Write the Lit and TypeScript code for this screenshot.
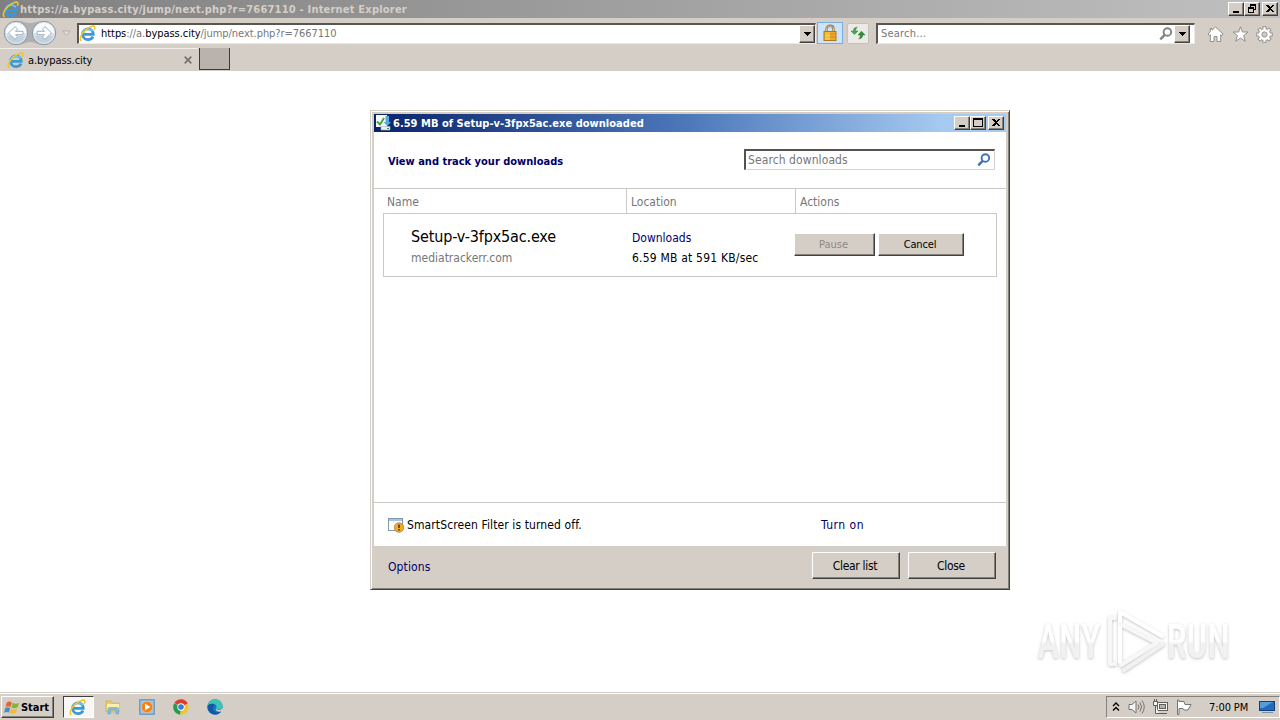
import { LitElement, html, css, svg } from 'lit'
import { customElement } from 'lit/decorators.js'

const ieLogo = (size: number) => html`
  <svg class="ie" width=${size} height=${size} viewBox="0 0 16 16">
    <path d="M13.2 10.9C12.3 12.8 10.6 13.7 8.5 13.7C5.5 13.7 3.4 11.6 3.4 8.7C3.4 5.8 5.6 3.6 8.5 3.6C11.4 3.6 13.4 5.7 13.4 8.9H4.2" fill="none" stroke="#3a9ad8" stroke-width="2.6" />
    <path d="M3.7 7.3C4.5 5 6.3 3.7 8.6 3.7C10.6 3.7 12 4.6 12.8 6" fill="none" stroke="#6cc9f2" stroke-width="1.5" />
    <path d="M2.4 14.8C-.4 13.7 2.1 8.4 6 4.9C9.9 1.4 14.3 -.2 14.9 2.1C15.1 3 14.8 3.8 14.4 4.5" fill="none" stroke="#efc52b" stroke-width="1.5" />
  </svg>
`

const lens = (color: string) => html`
  <svg class="lens" width="14" height="14" viewBox="0 0 14 14">
    <circle cx="8.4" cy="5" r="3.8" fill="#fff" stroke=${color} stroke-width="1.9" />
    <path d="M5.7 7.8L1.3 12.3" stroke=${color} stroke-width="2.4" />
  </svg>
`

const glyphs = {
  min: svg`<rect x="3" y="8" width="6" height="2" />`,
  max: svg`<path d="M1 1H11V10H1ZM2 3V9H10V3Z" fill-rule="evenodd" />`,
  restore: svg`<path d="M4 1H10V7H8V6H9V3H5V4H4ZM2 4H8V10H2ZM3 6V9H7V6Z" fill-rule="evenodd" />`,
  close: svg`<path d="M2 2H4L6 4L8 2H10L7 5.5L10 9H8L6 7L4 9H2L5 5.5Z" />`,
}

const windowButton = (name: keyof typeof glyphs) => html`
  <button class="wbtn ${name}" aria-label=${name}>
    <svg width="12" height="11" viewBox="0 0 12 11" shape-rendering="crispEdges">${glyphs[name]}</svg>
  </button>
`

const dropArrow = html`
  <svg width="8" height="4" viewBox="0 0 8 4" shape-rendering="crispEdges"><path d="M0 0H8L4 4Z" /></svg>
`

const shared = css`
  * { box-sizing: border-box; }
  svg { display: block; flex: none; }
  button {
    font: inherit;
    color: #000;
    padding: 0;
    border: 1px solid;
    border-color: #fff #404040 #404040 #fff;
    box-shadow: inset -1px -1px #858079;
    background: #d5cec7;
    display: flex;
    align-items: center;
    justify-content: center;
    flex: none;
  }
  .wbtn { width: 16px; height: 14px; }
  .wbtn svg { margin-top: -1px; }
  .wbtn.close { margin-left: 2px; }
  .grow { flex: 1; }
`

@customElement('nav-bar')
export class NavBar extends LitElement {
  static styles = [shared, css`
    :host {
      display: flex;
      height: 29px;
      align-items: center;
      padding-left: 2px;
      color: #777;
    }
    .arrows { margin-top: 2px; }
    .history { margin: 2px 6px 0 4px; }
    .field {
      display: flex;
      align-items: center;
      height: 21px;
      margin-top: 1px;
      background: #fff;
      border: solid;
      border-width: 2px 1px 1px 2px;
      border-color: #595550 #eee9e3 #eee9e3 #595550;
    }
    .address { width: 739px; }
    .url { margin: 1px 0 0 5px; letter-spacing: -0.05px; }
    .url b { font-weight: normal; color: #000; }
    .drop { width: 16px; height: 18px; }
    .lock {
      display: flex;
      width: 26px;
      height: 22px;
      margin: 1px 0 0 1px;
      align-items: center;
      justify-content: center;
      background: #cfe2fb;
      border: 1px solid #7cade0;
    }
    .refresh {
      width: 22px;
      height: 21px;
      margin: 1px 7px 0 4px;
      border: 1px solid #c5c1bc;
      border-radius: 2px;
      background: #ece9e6;
      box-shadow: none;
    }
    .search { width: 319px; padding-left: 3px; }
    .search span { margin-top: 1px; letter-spacing: 0.2px; }
    .search .drop { margin: 0 4px 0 1px; }
    .tools { display: flex; gap: 8px; margin: 4px 0 0 12px; }
    .tools svg + svg { margin-left: -0.5px; }
  `]

  render() {
    return html`
      <svg class="arrows" width="56" height="27" viewBox="0 0 56 27">
        <path d="M14 1C22 1 23 3 28 3S35 1 43 1A13 13 0 0 1 43 25C35 25 34 22 28 22S22 25 14 25A12 12 0 0 1 14 1Z" fill="#aeb0b2" />
        ${[14, 42].map(x => svg`
          <circle cx=${x} cy="13" r="11.7" fill="#dae2e9" stroke="#8999a6" />
          <path d="M${x - 10.3} 13A10.3 10.3 0 0 1 ${x + 10.3} 13Z" fill="#f8fafc" />
          <path d="M${x - 9} 16A9.4 9.4 0 0 0 ${x + 9} 16Z" fill="#c3d1df" />
        `)}
        <path d="M6.5 13L13 6.7L15.6 9.2L13.5 11.3H21V14.7H13.5L15.6 16.8L13 19.3Z" fill="#fff" stroke="#94a8b8" stroke-width=".9" />
        <path d="M49.5 13L43 6.7L40.4 9.2L42.5 11.3H35V14.7H42.5L40.4 16.8L43 19.3Z" fill="#fff" stroke="#94a8b8" stroke-width=".9" />
      </svg>
      <svg class="history" width="9" height="7" viewBox="0 0 9 7"><path d="M.8 1H8.2L4.5 5.3Z" fill="#e5e1dd" stroke="#b4aea8" /></svg>
      <div class="field address">
        ${ieLogo(17)}
        <span class="url"><b>https</b>://a.<b>bypass.city</b>/jump/next.php?r=7667110</span>
        <span class="grow"></span>
        <button class="drop" aria-label="Show address list">${dropArrow}</button>
      </div>
      <div class="lock">
        <svg width="14" height="18" viewBox="0 0 14 18">
          <path d="M3.5 8V5C3.5 .7 10.5 .7 10.5 5V8" fill="none" stroke="#8e7b49" stroke-width="2.4" />
          <path d="M3.5 8V5C3.5 1 10.5 1 10.5 5V8" fill="none" stroke="#d6c68f" />
          <rect x="1" y="7.5" width="12" height="9" fill="#f0ad22" stroke="#aa761a" />
          <path d="M2 10H12M2 13H12" stroke="#c7871a" />
          <path d="M2 8.5H7V16H2Z" fill="#ffe176" opacity=".5" />
        </svg>
      </div>
      <button class="refresh" aria-label="Refresh">
        <svg width="16" height="14" viewBox="0 0 16 14">
          <path d="M7.3 1.2C4.9 1.2 3.4 2.2 3.4 5H1L4.5 8.5L8 5H5.6C5.6 3 6.2 2 7.3 1.2Z" fill="#44a94e" stroke="#2c8538" stroke-width=".5" />
          <path d="M8.7 12.8C11.1 12.8 12.6 11.8 12.6 9H15L11.5 5.2L8 9H10.4C10.4 11 9.8 12 8.7 12.8Z" fill="#318d39" stroke="#23752c" stroke-width=".5" />
        </svg>
      </button>
      <div class="field search">
        <span>Search...</span>
        <div class="grow"></div>
        ${lens('#85817e')}
        <button class="drop" aria-label="Search options">${dropArrow}</button>
      </div>
      <div class="tools">
        <svg width="17" height="17" viewBox="0 0 17 17" fill="#fff" stroke="#938e89">
          <path d="M8.5 1L16 8L14.7 9.5L13.7 8.7V15.5H10V10.5H7V15.5H3.3V8.7L2.3 9.5L1 8L3.3 5.8V2.5H5V4.2Z" />
        </svg>
        <svg width="17" height="17" viewBox="0 0 17 17" fill="#fff" stroke="#938e89">
          <path d="M8.5 .8L10.4 6H16L11.6 9.6L13.2 15.3L8.5 12L3.8 15.3L5.4 9.6L1 6H6.6Z" />
        </svg>
        <svg width="17" height="17" viewBox="0 0 17 17">
          <g stroke="#938e89" stroke-width="4">
            ${[0, 45, 90, 135].map(a => svg`<path d="M8.5 .3V16.7" transform="rotate(${a} 8.5 8.5)" />`)}
          </g>
          <circle cx="8.5" cy="8.5" r="6.3" fill="#938e89" />
          <g stroke="#fff" stroke-width="2.2">
            ${[0, 45, 90, 135].map(a => svg`<path d="M8.5 1.2V15.8" transform="rotate(${a} 8.5 8.5)" />`)}
          </g>
          <circle cx="8.5" cy="8.5" r="5.5" fill="#fff" />
          <circle cx="8.5" cy="8.5" r="2.6" fill="#d5cec7" stroke="#938e89" />
        </svg>
      </div>
    `
  }
}

@customElement('download-dialog')
export class DownloadDialog extends LitElement {
  static styles = [shared, css`
    :host {
      display: flex;
      flex-direction: column;
      box-sizing: border-box;
      width: 640px;
      height: 480px;
      padding: 3px 2px 2px 3px;
      background: #d5cec7;
      border: 1px solid;
      border-color: #d5cec7 #404040 #404040 #d5cec7;
      box-shadow: inset 1px 1px #fff, inset -1px -1px #858079;
      font-size: 12px;
      color: #000;
    }
    .title {
      display: flex;
      align-items: center;
      height: 18px;
      margin-right: 1px;
      padding: 0 2px 0 1px;
      background: linear-gradient(90deg, #0a246a, #4d79bb 50%, #a6caf0 90%);
      color: #fff;
      font-size: 11px;
      font-weight: bold;
    }
    .title span { margin: 1px 0 0 2px; letter-spacing: 0.03px; }
    .pane {
      display: flex;
      flex-direction: column;
      height: 414px;
      margin-right: 1px;
      background: #fff;
    }
    .top {
      display: flex;
      align-items: center;
      justify-content: space-between;
      height: 56px;
      padding: 0 11px 0 14px;
      color: #000066;
      font-size: 11px;
      font-weight: bold;
    }
    .top > span { padding-top: 3px; }
    .search {
      display: flex;
      align-items: center;
      justify-content: space-between;
      width: 251px;
      height: 21px;
      margin-bottom: 2px;
      padding: 0 3px 0 2px;
      border: solid;
      border-width: 2px 1px 1px 2px;
      border-color: #55524e #d8d3cd #d8d3cd #55524e;
      color: #777;
      font-size: 12px;
      font-weight: normal;
      letter-spacing: 0.09px;
    }
    .search span { padding-top: 1px; }
    .cols {
      display: grid;
      grid-template-columns: 252px 169px 1fr;
      height: 25px;
      border-top: 1px solid #ccc9c5;
      color: #777;
      line-height: 26px;
    }
    .cols span { height: 24px; padding-left: 4px; border-left: 1px solid #ccc9c5; }
    .cols span:first-child { padding-left: 13px; border: none; }
    .item {
      display: grid;
      grid-template-columns: 221px 162px 1fr;
      height: 64px;
      margin: 0 9px;
      padding: 13px 0 0 27px;
      border: 1px solid #ccc9c5;
      line-height: 20px;
    }
    .file { font-size: 16px; letter-spacing: -0.15px; }
    .host { padding-top: 1px; color: #777; }
    .where { padding-top: 1px; }
    .speed { letter-spacing: 0.2px; }
    .link { color: #000066; }
    .acts { display: flex; gap: 3px; padding-top: 6px; }
    .acts button { width: 81px; height: 23px; padding: 1px 2px 0 0; font-size: 11px; }
    .acts button + button { width: 86px; letter-spacing: -0.15px; }
    .acts button:disabled { color: #8d8984; }
    .smart {
      display: flex;
      align-items: center;
      height: 44px;
      padding-left: 14px;
      border-top: 1px solid #ccc9c5;
      letter-spacing: 0.11px;
    }
    .smart svg { margin-right: 3px; }
    .smart .text { width: 414px; }
    .smart .link { letter-spacing: 0.5px; }
    .foot {
      display: flex;
      align-items: center;
      height: 40px;
      padding: 0 11px 0 14px;
      gap: 7px;
    }
    .foot .link { padding-top: 1px; letter-spacing: 0.12px; }
    .foot button { width: 88px; height: 27px; margin: 0 0 1px 1px; padding: 1px 2px 0 0; letter-spacing: -0.3px; }
  `]

  render() {
    return html`
      <div class="title">
        <svg width="16" height="16" viewBox="0 0 16 16">
          <rect x="1" y="0" width="11" height="12" fill="#f6fafc" />
          <path d="M2 6.5L5 9.5L9 3" stroke="#49a342" stroke-width="2" fill="none" />
          <path d="M10.5 1H14V7H16L12.3 11L8.5 7H10.5Z" fill="#58a7de" />
          <path d="M6 11.5H15V15H6Z" fill="#eceded" stroke="#aeb2b8" stroke-width=".6" />
          <path d="M12 13.5H14" stroke="#2f9c42" />
        </svg>
        <span>6.59 MB of Setup-v-3fpx5ac.exe downloaded</span>
        <div class="grow"></div>
        ${windowButton('min')}${windowButton('max')}${windowButton('close')}
      </div>
      <div class="pane">
        <div class="top">
          <span>View and track your downloads</span>
          <div class="search"><span>Search downloads</span>${lens('#3d73b5')}</div>
        </div>
        <div class="cols"><span>Name</span><span>Location</span><span>Actions</span></div>
        <div class="item">
          <div>
            <div class="file">Setup-v-3fpx5ac.exe</div>
            <div class="host">mediatrackerr.com</div>
          </div>
          <div class="where">
            <div class="link">Downloads</div>
            <div class="speed">6.59 MB at 591 KB/sec</div>
          </div>
          <div class="acts"><button disabled>Pause</button><button>Cancel</button></div>
        </div>
        <div class="grow"></div>
        <div class="smart">
          <svg width="16" height="16" viewBox="0 0 16 16">
            <rect x=".5" y="1.5" width="14" height="12" fill="#fff" stroke="#8198ad" />
            <path d="M1 3H14" stroke="#a4c4e5" stroke-width="2" />
            <circle cx="11" cy="10.5" r="4.8" fill="#f2ab25" stroke="#a87012" stroke-width=".6" />
            <path d="M11 7.5V11M11 12V13.5" stroke="#422b08" stroke-width="1.5" />
          </svg>
          <span class="text">SmartScreen Filter is turned off.</span>
          <span class="link">Turn on</span>
        </div>
      </div>
      <div class="foot">
        <span class="link">Options</span>
        <div class="grow"></div>
        <button>Clear list</button>
        <button>Close</button>
      </div>
    `
  }
}

@customElement('task-bar')
export class TaskBar extends LitElement {
  static styles = [shared, css`
    :host {
      display: flex;
      align-items: center;
      box-sizing: border-box;
      height: 28px;
      padding: 1px 0 0 1px;
      background: #d5cec7;
      border-top: 1px solid #d5cec7;
      box-shadow: inset 0 1px #fff;
      color: #000;
    }
    .start { width: 53px; height: 22px; padding: 1px 2px 0 0; gap: 1px; font-weight: bold; }
    .active {
      display: flex;
      align-items: center;
      justify-content: center;
      width: 31px;
      height: 22px;
      margin-left: 9px;
      padding-right: 2px;
      background: #f8f7f5;
      border: 1px solid;
      border-color: #404040 #fff #fff #404040;
    }
    .pinned { display: flex; gap: 18px; margin-left: 11px; }
    .tray {
      display: flex;
      align-items: center;
      width: 174px;
      height: 22px;
      padding-left: 5px;
      border: 1px solid;
      border-color: #858079 #fff #fff #858079;
    }
    .tray svg + svg { margin-left: 7px; }
    .tray .sound { padding-left: 1px; }
    .clock { margin: 1px 11px 0 17px; letter-spacing: -0.1px; white-space: nowrap; }
  `]

  render() {
    return html`
      <button class="start">
        <svg width="16" height="15" viewBox="0 0 16 15">
          <path d="M2.7 2.5C4.7 1 6.3 1.6 7.8 2.4L6.5 7C4.8 6 3.2 6 1.5 7Z" fill="#e7632c" />
          <path d="M8.7 2.8C10.8 4 12.6 4 15 2.7L13.7 7.3C11.7 8.5 9.3 8.6 7.4 7.5Z" fill="#81b63c" />
          <path d="M1.2 8C3.2 6.8 4.8 7 6.2 8L5 12.6C3.3 11.6 1.8 11.7 0 12.7Z" fill="#428fd0" />
          <path d="M7.1 8.4C9 9.5 11 9.6 13.4 8.3L12.1 12.8C9.8 14.1 7.7 14.2 5.8 13Z" fill="#f1bd36" />
        </svg>
        Start
      </button>
      <div class="active">${ieLogo(17)}</div>
      <div class="pinned">
        <svg width="16" height="16" viewBox="0 0 16 16">
          <path d="M1 2H6L7 4H14V13H1Z" fill="#efcb67" stroke="#c7a74e" stroke-width=".6" />
          <path d="M2 5H14V11H2Z" fill="#fff0a9" />
          <path d="M3 15V10Q3 8.5 4.5 8.5H12Q13.5 8.5 13.5 10V15H11V11H5.5V15Z" fill="#83bfe3" stroke="#5096c2" stroke-width=".5" />
        </svg>
        <svg width="16" height="16" viewBox="0 0 16 16">
          <rect x=".8" y=".8" width="14.4" height="14.4" fill="#9bc5e6" stroke="#5288ba" />
          <circle cx="8" cy="8" r="5.7" fill="#f18317" stroke="#f5d1a4" stroke-width=".5" />
          <path d="M6 4.8L11.5 8L6 11.2Z" fill="#fff" />
        </svg>
        <svg width="16" height="16" viewBox="0 0 16 16">
          <path d="M8 8L1.4 3.8A7.7 7.7 0 0 1 14.8 4.4Z" fill="#df3c2f" />
          <path d="M8 8L1.2 4.2A7.7 7.7 0 0 0 7.4 15.7Z" fill="#289b4b" />
          <path d="M8 8L14.7 4.4A7.7 7.7 0 0 1 7.4 15.7Z" fill="#f6c42b" />
          <circle cx="8" cy="8" r="3.7" fill="#fff" />
          <circle cx="8" cy="8" r="2.8" fill="#397cdd" />
        </svg>
        <svg width="16" height="16" viewBox="0 0 16 16">
          <circle cx="8" cy="8" r="7.7" fill="#1476c5" />
          <path d="M.5 7C1.5-.5 11-2 14.6 4C17 8 14.5 11 10.5 10.5C8.5 10.2 9.5 9 9.5 7.7C9.5 4 3.5 3.5 .5 7Z" fill="#3bc6b3" />
          <path d="M5.8 8C5 12 9.5 14.5 14 12.5C10 18 1 15 .5 8.5C.5 4 7 4 8 6.5C6.8 6.4 6 7 5.8 8Z" fill="#1558a1" />
          <path d="M9.2 10C12 12 14.7 10.5 15.3 8.5L16 13L13.6 12.5C11 13 9 12 8.5 10Z" fill="#d5cec7" />
        </svg>
      </div>
      <div class="grow"></div>
      <div class="tray">
        <svg width="8" height="10" viewBox="0 0 8 10" fill="none" stroke="#000" stroke-width="1.4"><path d="M1 4L4 1L7 4M1 8.5L4 5.5L7 8.5" /></svg>
        <svg class="sound" width="18" height="16" viewBox="0 0 17 16" fill="none" stroke="#77736f">
          <path d="M1 5.5H4L8 2V14L4 10.5H1Z" fill="#f7f6f4" /><path d="M10 5.5Q12 8 10 10.5M12 3.5Q15 8 12 12.5M14 1.5Q18.5 8 14 14.5" />
        </svg>
        <svg width="17" height="16" viewBox="0 0 17 16" fill="#f7f6f4" stroke="#625f5b">
          <rect x="5.5" y="3.5" width="10" height="8" /><rect x="7.5" y="5.5" width="6" height="4" fill="#b7b4b0" /><path d="M7 14.5H15M1.5 2.5H5.5V6.5H1.5ZM2.5 0V2.5M4.5 0V2.5M3.5 6.5V14.5H7" />
        </svg>
        <svg width="16" height="16" viewBox="0 0 16 16" fill="#fff" stroke="#77736f">
          <path d="M1.5 1V15.5H3V9.5H7L8 11H12L15 5.5H9L8 2.5H3V1Z" />
        </svg>
        <span class="clock">7:00 PM</span>
        <svg width="16" height="14" viewBox="0 0 16 14">
          <rect x=".5" y="1.5" width="15" height="9" fill="#216cb9" stroke="#153f7a" /><path d="M1 2H14L4 8H1Z" fill="#5a9cdb" /><path d="M3 12.5H14" stroke="#7790ae" />
        </svg>
      </div>
    `
  }
}

@customElement('app-root')
export class AppRoot extends LitElement {
  static styles = [shared, css`
    :host {
      display: flex;
      flex-direction: column;
      position: relative;
      width: 1280px;
      height: 720px;
      overflow: hidden;
      background: #fff;
      font: 11px/14px "DejaVu Sans Condensed", "DejaVu Sans", sans-serif;
      font-stretch: condensed;
      white-space: nowrap;
    }
    .chrome { height: 71px; background: #d5cec7; }
    .title {
      display: flex;
      align-items: center;
      height: 18px;
      padding: 0 2px 0 2px;
      background: linear-gradient(90deg, #808080, #c0c0c0);
      color: #d5cec7;
      font-weight: bold;
    }
    .title span { margin: 1px 0 0 1px; letter-spacing: 0.21px; }
    .tabs { display: flex; height: 24px; padding-top: 1px; }
    .tab {
      display: flex;
      align-items: center;
      width: 198px;
      height: 23px;
      padding: 0 6px 0 7px;
      border-top: 1px solid #f1eeeb;
    }
    .tab span { margin: 1px 0 0 4px; letter-spacing: -0.05px; }
    .newtab {
      width: 31px;
      height: 22px;
      margin-left: 1px;
      background: #bab3ad;
      border: solid #3c3936;
      border-width: 0 1px 1px 1px;
    }
    .page { flex: 1; }
    download-dialog { position: absolute; left: 370px; top: 110px; }
    .mark { position: absolute; left: 1030px; top: 604px; overflow: visible; }
    .mark text { font-family: Roboto, sans-serif; font-size: 48px; font-weight: 500; }
  `]

  render() {
    return html`
      <div class="chrome">
        <div class="title">
          ${ieLogo(17)}
          <span>https://a.bypass.city/jump/next.php?r=7667110 - Internet Explorer</span>
          <div class="grow"></div>
          ${windowButton('min')}${windowButton('restore')}${windowButton('close')}
        </div>
        <nav-bar></nav-bar>
        <div class="tabs">
          <div class="tab">
            ${ieLogo(17)}<span>a.bypass.city</span>
            <div class="grow"></div>
            <svg width="8" height="8" viewBox="0 0 8 8" stroke="#77716c" stroke-width="1.7"><path d="M.7 .7L7.3 7.3M7.3 .7L.7 7.3" /></svg>
          </div>
          <div class="newtab"></div>
        </div>
      </div>
      <div class="page"></div>
      <task-bar></task-bar>
      <svg class="mark" width="210" height="76" viewBox="0 0 210 76">
        <defs>
          <filter id="soft" x="-10%" y="-10%" width="120%" height="125%"><feDropShadow dx="0" dy="1" stdDeviation="1.5" flood-color="#999" flood-opacity=".6" /></filter>
          <linearGradient id="fade" x1="0" y1="0" x2="0" y2="1"><stop offset=".5" stop-color="#fff" /><stop offset=".55" stop-color="#f1f1f1" /></linearGradient>
        </defs>
        <g filter="url(#soft)" fill="url(#fade)">
          <g transform="scale(.76 1)">
            <text x="10" y="54">ANY</text>
            <text x="180" y="54">RUN</text>
          </g>
          <g fill="none" stroke-linejoin="round" stroke-linecap="round" stroke-width="4">
            <path d="M85 14H80V60H85" stroke="#f7f7f7" />
            <path d="M90 58V8L132 32" stroke="#fff" />
            <path d="M90 20L127 39L91 61" stroke="#f7f7f7" />
            <path d="M133 40L94 66" stroke="#f1f1f1" />
          </g>
        </g>
      </svg>
      <download-dialog></download-dialog>
    `
  }
}
